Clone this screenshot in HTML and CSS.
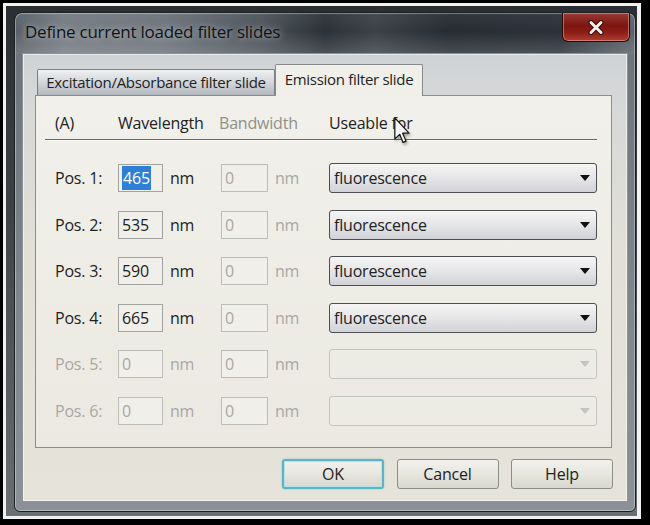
FILE: index.html
```html
<!DOCTYPE html>
<html>
<head>
<meta charset="utf-8">
<title>Define current loaded filter slides</title>
<link rel="stylesheet" href="styles.css">
</head>
<body>
<div class="photo">
  <div class="window">
    <div class="titlebar">
      <span class="title">Define current loaded filter slides</span>
      <div class="close">
        <svg width="18" height="15" viewBox="0 0 18 15">
          <path d="M4 2.5 L14 12.5 M14 2.5 L4 12.5" stroke="#3a0c09" stroke-width="5" stroke-linecap="round"/>
          <path d="M4 2.5 L14 12.5 M14 2.5 L4 12.5" stroke="#f2eeee" stroke-width="3" stroke-linecap="round"/>
        </svg>
      </div>
    </div>
    <div class="client">
      <div class="tabs">
        <div class="tab">Excitation/Absorbance filter slide</div>
        <div class="tab active">Emission filter slide</div>
      </div>
      <div class="panel">
        <div class="cols head">
          <span>(A)</span>
          <span class="span2">Wavelength</span>
          <span class="span2 dim">Bandwidth</span>
          <span>Useable for</span>
        </div>
        <div class="cols rows">
          <span>Pos. 1:</span>
          <div class="box"><span class="sel">465</span></div>
          <span class="nm">nm</span>
          <div class="box off">0</div>
          <span class="nm off">nm</span>
          <div class="dd"><span>fluorescence</span><i class="arrow"></i></div>

          <span>Pos. 2:</span>
          <div class="box">535</div>
          <span class="nm">nm</span>
          <div class="box off">0</div>
          <span class="nm off">nm</span>
          <div class="dd"><span>fluorescence</span><i class="arrow"></i></div>

          <span>Pos. 3:</span>
          <div class="box">590</div>
          <span class="nm">nm</span>
          <div class="box off">0</div>
          <span class="nm off">nm</span>
          <div class="dd"><span>fluorescence</span><i class="arrow"></i></div>

          <span>Pos. 4:</span>
          <div class="box">665</div>
          <span class="nm">nm</span>
          <div class="box off">0</div>
          <span class="nm off">nm</span>
          <div class="dd"><span>fluorescence</span><i class="arrow"></i></div>

          <span class="off">Pos. 5:</span>
          <div class="box off">0</div>
          <span class="nm off">nm</span>
          <div class="box off">0</div>
          <span class="nm off">nm</span>
          <div class="dd off"><span></span><i class="arrow"></i></div>

          <span class="off">Pos. 6:</span>
          <div class="box off">0</div>
          <span class="nm off">nm</span>
          <div class="box off">0</div>
          <span class="nm off">nm</span>
          <div class="dd off"><span></span><i class="arrow"></i></div>
        </div>
        <svg class="cursor" width="17" height="27" viewBox="0 0 12 19">
          <path d="M0.6 0.6 V15.4 L4 12.2 L6.4 17.9 L8.5 17 L6.1 11.4 H10.6 Z" fill="#f4f4f4" stroke="#151515" stroke-width="0.85" stroke-linejoin="round"/>
        </svg>
      </div>
      <div class="buttons">
        <div class="btn ok">OK</div>
        <div class="btn">Cancel</div>
        <div class="btn">Help</div>
      </div>
    </div>
  </div>
</div>
</body>
</html>
```
FILE: styles.css
```css
* {
  box-sizing: border-box;
}

html,
body {
  margin: 0;
}

body {
  width: 650px;
  height: 525px;
  overflow: hidden;
  background: #000;
  font-family: "Open Sans", "Liberation Sans", sans-serif;
  font-size: 16px;
  letter-spacing: -0.2px;
  color: #222;
}

.photo {
  margin: 3px 9px 6px 3px;
  height: 516px;
  border: 3px solid #f1f1f1;
  border-right-width: 4px;
  padding: 6px 0 0 8px;
  background: linear-gradient(180deg, #2a2e32 0%, #3d4246 40%, #6a6f74 100%);
}

.window {
  width: 622px;
  height: 500px;
  display: flex;
  flex-direction: column;
  padding: 0 7px 9px 7px;
  border: 1px solid #1b2025;
  border-radius: 8px 8px 6px 6px;
  box-shadow: inset 0 0 0 1px rgba(255, 255, 255, 0.35);
  background:
    linear-gradient(180deg, rgba(255, 255, 255, 0.06) 0%, rgba(255, 255, 255, 0) 45%, rgba(255, 255, 255, 0.16) 100%) 0 0 / 100% 41px no-repeat,
    linear-gradient(90deg, #586067 0%, #747b82 8%, #6c737a 24%, #4b5259 40%, #2b3138 50%, #3b4148 58%, #262c33 70%, #2b3139 88%, #5b6269 100%) 0 0 / 100% 41px no-repeat,
    linear-gradient(180deg, #6a7178 0%, #7f868c 60%, #8b9196 100%);
}

.titlebar {
  height: 40px;
  display: flex;
  justify-content: space-between;
  align-items: flex-start;
}

.title {
  margin: 7px 0 0 3px;
  line-height: 24px;
  font-size: 17px;
  letter-spacing: -0.25px;
  color: #0f1317;
  white-space: nowrap;
  text-shadow: 0 0 6px rgba(255, 255, 255, 0.5), 0 0 12px rgba(255, 255, 255, 0.3);
}

.close {
  width: 68px;
  height: 29px;
  margin-right: -2px;
  display: flex;
  align-items: center;
  justify-content: center;
  border: 1px solid #2a0705;
  border-top: none;
  border-radius: 0 0 6px 6px;
  background: linear-gradient(180deg, #9a3a33 0%, #7c1610 45%, #8c1e15 70%, #ad3f35 100%);
  box-shadow: inset 0 0 0 1px rgba(255, 195, 185, 0.45);
}

.client {
  flex: 1;
  display: flex;
  flex-direction: column;
  padding: 10px 15px 12px 12px;
  border: 1px solid #8b9298;
  box-shadow: inset 0 0 0 1px rgba(255, 255, 255, 0.5);
  background: linear-gradient(180deg, #cfd2d5 0px, #d6d8d8 45px, #e2e0d6 200px, #e6e4da 100%);
}

.tabs {
  height: 31px;
  display: flex;
  align-items: flex-end;
  padding-left: 2px;
}

.tab {
  width: 238px;
  height: 26px;
  border: 1px solid #7a7f85;
  border-bottom: none;
  border-radius: 2px 2px 0 0;
  background: linear-gradient(180deg, #eef0f1 0%, #d6d9dc 45%, #b3b8be 100%);
  font-size: 15px;
  letter-spacing: -0.3px;
  line-height: 24px;
  text-align: center;
  white-space: nowrap;
  overflow: hidden;
}

.tab.active {
  position: relative;
  z-index: 1;
  width: 148px;
  height: 32px;
  margin-bottom: -1px;
  border-color: #878a8d;
  background: #f0efe9;
  line-height: 29px;
}

.panel {
  flex: 1;
  position: relative;
  padding: 14px 14px 0 9px;
  border: 1px solid #8b8d8e;
  background: linear-gradient(180deg, #f1f0ea 0%, #ebe9e1 100%);
}

.cols {
  display: grid;
  grid-template-columns: 63px 45px 58px 47px 61px 268px;
}

.head {
  padding: 0 0 3px 10px;
  line-height: 26px;
  border-bottom: 1px solid #666;
  box-shadow: 0 1px 0 #fbfaf6;
  white-space: nowrap;
}

.span2 {
  grid-column: span 2;
}

.dim {
  margin-left: -2px;
  color: #8f8f8b;
}

.rows {
  margin-top: 24px;
  padding-left: 10px;
  grid-auto-rows: 28px;
  row-gap: 18.5px;
  align-items: center;
  white-space: nowrap;
}

.box {
  height: 28px;
  padding-left: 3px;
  line-height: 26px;
  border: 1px solid #a2a29e;
  background: #f0efe9;
}

.sel {
  padding: 1px 1px;
  background: #2f7fd6;
  color: #fff;
}

.nm {
  padding-left: 7px;
}

.off {
  color: #a8a8a4;
}

.box.off {
  border-color: #bdbdb8;
}

.dd {
  height: 30px;
  display: flex;
  align-items: center;
  justify-content: space-between;
  padding: 0 6px 0 4px;
  border: 1px solid #4d4e51;
  border-radius: 3px;
  background: linear-gradient(180deg, #f5f5f5 0%, #e6e6e8 50%, #d1d2d7 100%);
}

.arrow {
  width: 0;
  height: 0;
  border-left: 5px solid transparent;
  border-right: 5px solid transparent;
  border-top: 6px solid #111;
}

.dd.off {
  border-color: #c5c5c0;
  background: #ecebe4;
}

.dd.off .arrow {
  border-top-color: #c3c3c3;
}

.cursor {
  position: absolute;
  left: 358px;
  top: 21px;
  filter: drop-shadow(1px 2px 1.5px rgba(0, 0, 0, 0.35));
}

.buttons {
  display: flex;
  justify-content: flex-end;
  gap: 12.5px;
  margin: 11px -1px 0 0;
}

.btn {
  width: 102px;
  height: 30px;
  display: flex;
  align-items: center;
  justify-content: center;
  border: 1px solid #8c8c88;
  border-radius: 3px;
  background: linear-gradient(180deg, #f2f1ec 0%, #e7e6df 50%, #d8d7cf 100%);
}

.btn.ok {
  border: 2px solid #5db4c2;
  box-shadow: inset 0 0 0 1px #b8e2e9, 0 0 2px #7cc6d0;
}
```
